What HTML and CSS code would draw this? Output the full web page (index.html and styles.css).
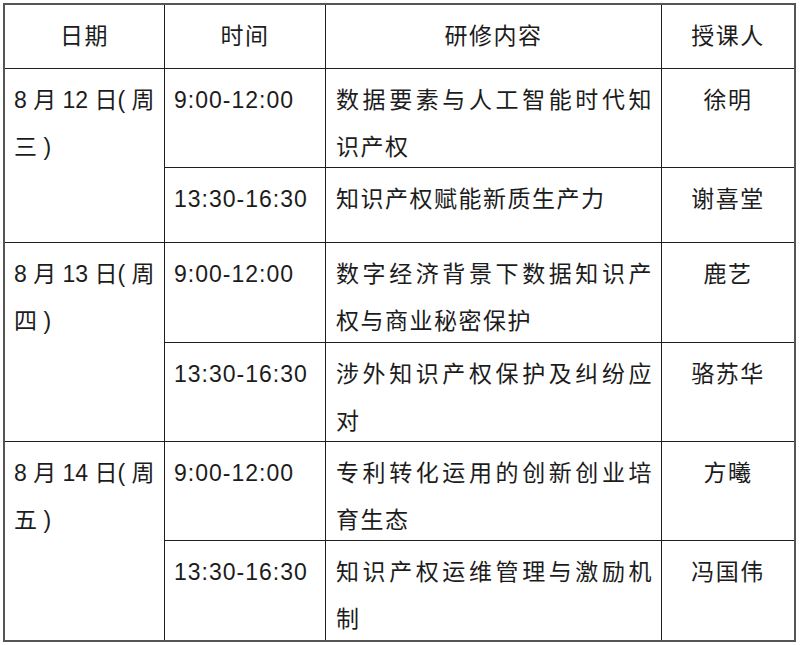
FILE: index.html
```html
<!DOCTYPE html>
<html lang="zh-CN">
<head>
<meta charset="utf-8">
<title>课程安排</title>
<link rel="stylesheet" href="styles.css">
</head>
<body>
<div class="schedule">
  <div class="cell head">日期</div>
  <div class="cell head">时间</div>
  <div class="cell head">研修内容</div>
  <div class="cell head">授课人</div>

  <div class="cell date d1">8 月 12 日( 周<br>三 )</div>
  <div class="cell time">9:00-12:00</div>
  <div class="cell topic">数据要素与人工智能时代知识产权</div>
  <div class="cell teacher">徐明</div>
  <div class="cell time">13:30-16:30</div>
  <div class="cell topic">知识产权赋能新质生产力</div>
  <div class="cell teacher">谢喜堂</div>

  <div class="cell date d2">8 月 13 日( 周<br>四 )</div>
  <div class="cell time">9:00-12:00</div>
  <div class="cell topic">数字经济背景下数据知识产权与商业秘密保护</div>
  <div class="cell teacher">鹿艺</div>
  <div class="cell time">13:30-16:30</div>
  <div class="cell topic">涉外知识产权保护及纠纷应对</div>
  <div class="cell teacher">骆苏华</div>

  <div class="cell date d3">8 月 14 日( 周<br>五 )</div>
  <div class="cell time">9:00-12:00</div>
  <div class="cell topic">专利转化运用的创新创业培育生态</div>
  <div class="cell teacher">方曦</div>
  <div class="cell time">13:30-16:30</div>
  <div class="cell topic">知识产权运维管理与激励机制</div>
  <div class="cell teacher">冯国伟</div>
</div>
</body>
</html>
```
FILE: styles.css
```css
html, body {
  margin: 0;
  padding: 0;
  background: #ffffff;
}

.schedule {
  margin: 3px 0 0 3px;
  width: 789px;
  display: grid;
  grid-template-columns: 159px 160px 335px 132px;
  grid-template-rows: 63px 98px 74px 99px 98px 98px 99px;
  gap: 1px;
  background: #1e1e1e;
  border: 2px solid #555555;
  font-family: "Liberation Sans", "Noto Sans CJK SC", sans-serif;
  font-size: 23px;
  color: #1c1c1c;
}

.cell {
  background: #ffffff;
  box-sizing: border-box;
  line-height: 47px;
  padding-top: 8px;
}

.head {
  padding-top: 0;
  display: flex;
  align-items: center;
  justify-content: center;
  letter-spacing: 1.5px;
}

.date {
  grid-row: span 2;
  padding-left: 9px;
  white-space: nowrap;
}

.time {
  padding-left: 9px;
  letter-spacing: 1px;
}

.topic {
  padding-left: 10px;
  padding-right: 8px;
  letter-spacing: 1.5px;
  text-align: justify;
}

.teacher {
  text-align: center;
  letter-spacing: 1.5px;
}
```
